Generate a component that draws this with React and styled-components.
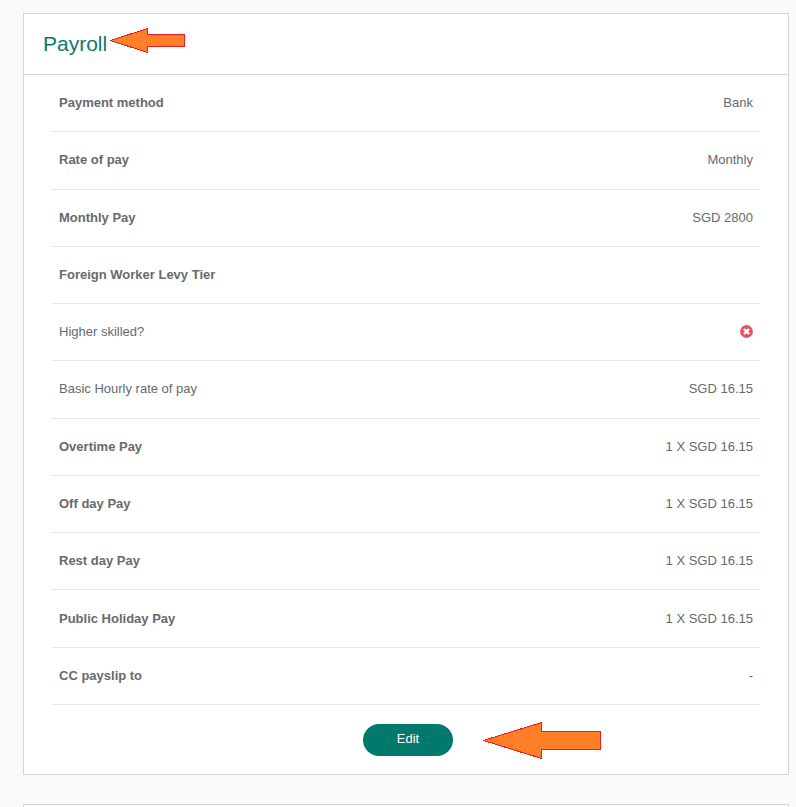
import React from 'react';
import styled, { createGlobalStyle } from 'styled-components';

const GlobalStyle = createGlobalStyle`
  *, *::before, *::after {
    box-sizing: border-box;
  }

  body {
    margin: 0;
    background: #f9fafc;
    color: #676a6c;
    font-family: "Liberation Sans", Arial, sans-serif;
    font-size: 13px;
    line-height: 20px;
  }
`;

const Page = styled.main`
  display: flex;
  flex-direction: column;
  gap: 29px;
  height: 100vh;
  overflow: hidden;
  padding: 13px 7px 0 23px;
`;

const Card = styled.section`
  flex: none;
  min-height: 60px;
  border: 1px solid #d4d5d6;
  background: #fff;
`;

const CardHeader = styled.header`
  display: flex;
  align-items: flex-start;
  gap: 3px;
  padding: 14px 19px 18px;
  border-bottom: 1px solid #d4d5d6;
`;

const Title = styled.h2`
  margin: 0;
  padding-top: 4px;
  color: #0b786d;
  font-size: 21px;
  font-weight: 400;
  line-height: 24px;
`;

const CardBody = styled.div`
  padding: 0 28px;
`;

const Details = styled.table`
  width: 100%;
  height: 630px;
  border-collapse: separate;
  border-spacing: 0;
`;

const Label = styled.th`
  padding: 0 7px;
  border-bottom: 1px solid #e7e8e9;
  font-weight: ${props => (props.$plain ? 400 : 700)};
  text-align: left;
`;

const Value = styled.td`
  padding: 0 7px;
  border-bottom: 1px solid #e7e8e9;
  text-align: right;
`;

const Icon = styled.svg`
  display: inline-block;
  width: 13px;
  height: 13px;
  vertical-align: -2px;
`;

const CardFooter = styled.footer`
  display: flex;
  justify-content: center;
  padding: 19px 0 18px 4px;
`;

const Action = styled.div`
  position: relative;
`;

const Button = styled.button`
  display: block;
  width: 90px;
  height: 32px;
  padding: 0 0 3px;
  border: 0;
  border-radius: 16px;
  background: #02796d;
  color: #fff;
  font: inherit;
  cursor: pointer;
`;

const HeaderArrow = styled.svg`
  display: block;
  flex: none;
`;

const ActionArrow = styled.svg`
  position: absolute;
  top: -2px;
  left: 120px;
`;

const NoIcon = () => (
  <Icon viewBox="0 0 13 13" role="img" aria-label="No">
    <circle cx="6.5" cy="6.5" r="6.4" fill="#ee4f61" />
    <path d="M4 4l5 5M9 4L4 9" stroke="#fff" strokeWidth="2.4" />
  </Icon>
);

const rows = [
  { label: 'Payment method', value: 'Bank' },
  { label: 'Rate of pay', value: 'Monthly' },
  { label: 'Monthly Pay', value: 'SGD 2800' },
  { label: 'Foreign Worker Levy Tier', value: '' },
  { label: 'Higher skilled?', value: <NoIcon />, plain: true },
  { label: 'Basic Hourly rate of pay', value: 'SGD 16.15', plain: true },
  { label: 'Overtime Pay', value: '1 X SGD 16.15' },
  { label: 'Off day Pay', value: '1 X SGD 16.15' },
  { label: 'Rest day Pay', value: '1 X SGD 16.15' },
  { label: 'Public Holiday Pay', value: '1 X SGD 16.15' },
  { label: 'CC payslip to', value: '-' },
];

const App = () => (
  <>
    <GlobalStyle />
    <Page>
      <Card>
        <CardHeader>
          <Title>Payroll</Title>
          <HeaderArrow width="76" height="26" aria-hidden="true" shapeRendering="crispEdges">
            <path
              d="M.5 12.5 37.5.5v6h37v12h-37v6z"
              fill="#ff7f27"
              stroke="#ed1c24"
            />
          </HeaderArrow>
        </CardHeader>
        <CardBody>
          <Details>
            <tbody>
              {rows.map(row => (
                <tr key={row.label}>
                  <Label scope="row" $plain={row.plain}>{row.label}</Label>
                  <Value>{row.value}</Value>
                </tr>
              ))}
            </tbody>
          </Details>
        </CardBody>
        <CardFooter>
          <Action>
            <Button type="button">Edit</Button>
            <ActionArrow width="119" height="38" aria-hidden="true" shapeRendering="crispEdges">
              <path
                d="M.5 18.5 58.5.5v9h59v18h-59v9z"
                fill="#ff7f27"
                stroke="#ed1c24"
              />
            </ActionArrow>
          </Action>
        </CardFooter>
      </Card>
      <Card />
    </Page>
  </>
);

export default App;
